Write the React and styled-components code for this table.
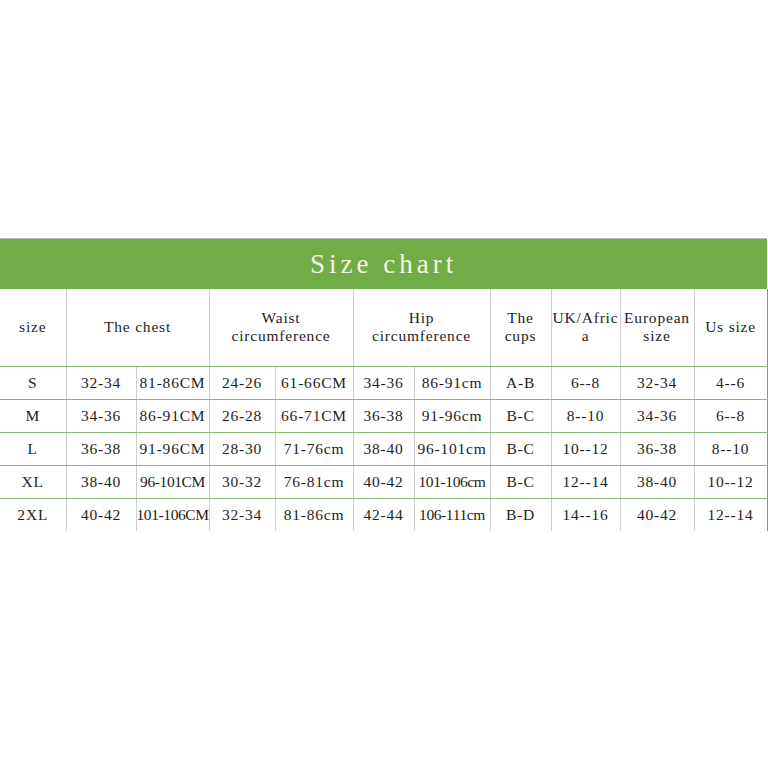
import React from 'react';
import styled, { createGlobalStyle } from 'styled-components';

const GlobalStyle = createGlobalStyle`
  html, body {
    margin: 0;
    padding: 0;
    background: #ffffff;
  }
`;

const Page = styled.div`
  width: 768px;
  height: 768px;
  display: flex;
  align-items: center;
  justify-content: flex-start;
  background: #ffffff;
`;

const Table = styled.table`
  width: 767px;
  border-collapse: collapse;
  table-layout: fixed;
  font-family: 'Liberation Serif', 'Times New Roman', serif;
  font-size: 15.5px;
  letter-spacing: 0.8px;
  color: #1e1e1e;
`;

const TitleCell = styled.th`
  height: 50px;
  padding: 0;
  line-height: 50px;
  background: #70ad47;
  border-top: 1px solid #b9b9b9;
  color: #f4f4e2;
  font-weight: normal;
  font-size: 27px;
  letter-spacing: 4px;
  text-align: center;
  vertical-align: middle;
`;

const HeadCell = styled.td`
  height: 77px;
  padding: 0;
  text-align: center;
  vertical-align: middle;
  line-height: 18px;
  white-space: nowrap;
  border-right: 1px solid ${(p) => (p.$last ? '#70ad47' : '#cfcfcf')};
  border-bottom: 1px solid #8cb872;
`;

const Cell = styled.td`
  height: 32px;
  padding: 0;
  line-height: 18px;
  text-align: center;
  vertical-align: middle;
  white-space: nowrap;
  letter-spacing: ${(p) => (p.$tight ? '-0.4px' : '0.8px')};
  border-right: 1px solid ${(p) => (p.$last ? '#70ad47' : '#cfcfcf')};
  border-bottom: ${(p) => (p.$bottom ? 'none' : '1px solid #8cb872')};
`;

const widths = [66, 70, 73, 66, 78, 61, 76, 61, 69, 74, 73];

const rows = [
  ['S', '32-34', '81-86CM', '24-26', '61-66CM', '34-36', '86-91cm', 'A-B', '6--8', '32-34', '4--6'],
  ['M', '34-36', '86-91CM', '26-28', '66-71CM', '36-38', '91-96cm', 'B-C', '8--10', '34-36', '6--8'],
  ['L', '36-38', '91-96CM', '28-30', '71-76cm', '38-40', '96-101cm', 'B-C', '10--12', '36-38', '8--10'],
  ['XL', '38-40', '96-101CM', '30-32', '76-81cm', '40-42', '101-106cm', 'B-C', '12--14', '38-40', '10--12'],
  ['2XL', '40-42', '101-106CM', '32-34', '81-86cm', '42-44', '106-111cm', 'B-D', '14--16', '40-42', '12--14'],
];

// long values (or long ones with wide capitals) need tighter spacing to fit
const isTight = (v) => v.length >= 9 || (v.length >= 8 && v.includes('CM'));

export default function App() {
  return (
    <>
      <GlobalStyle />
      <Page>
        <Table>
          <colgroup>
            {widths.map((w, i) => (
              <col key={i} style={{ width: w }} />
            ))}
          </colgroup>
          <thead>
            <tr>
              <TitleCell colSpan={11}>Size chart</TitleCell>
            </tr>
          </thead>
          <tbody>
            <tr>
              <HeadCell>size</HeadCell>
              <HeadCell colSpan={2}>The chest</HeadCell>
              <HeadCell colSpan={2}>
                Waist
                <br />
                circumference
              </HeadCell>
              <HeadCell colSpan={2}>
                Hip
                <br />
                circumference
              </HeadCell>
              <HeadCell>
                The
                <br />
                cups
              </HeadCell>
              <HeadCell>
                UK/Afric
                <br />a
              </HeadCell>
              <HeadCell>
                European
                <br />
                size
              </HeadCell>
              <HeadCell $last>Us size</HeadCell>
            </tr>
            {rows.map((r, ri) => (
              <tr key={r[0]}>
                {r.map((v, ci) => (
                  <Cell
                    key={ci}
                    $tight={isTight(v)}
                    $last={ci === r.length - 1}
                    $bottom={ri === rows.length - 1}
                  >
                    {v}
                  </Cell>
                ))}
              </tr>
            ))}
          </tbody>
        </Table>
      </Page>
    </>
  );
}
